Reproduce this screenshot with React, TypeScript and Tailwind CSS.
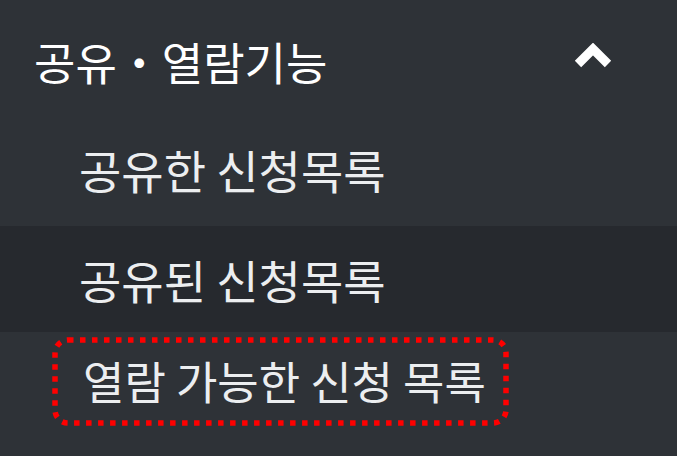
export default function App() {
  const font = { fontFamily: '"Noto Sans CJK KR", "Noto Sans", sans-serif' };
  return (
    <div className="w-[677px] h-[456px] overflow-hidden bg-[#2e3237] text-white" style={font}>
      <div className="h-[120px] flex items-center justify-between pl-[34px] pr-[64px] pt-[2px]">
        <span className="text-[45px] leading-none">공유・열람기능</span>
        <svg width="40" height="26" viewBox="0 0 40 26" className="mb-[10px]">
          <path d="M5 21 L20 6 L35 21" fill="none" stroke="#fff" strokeWidth="9" strokeLinejoin="miter" />
        </svg>
      </div>
      <div className="h-[106px] flex items-center pl-[79px] pb-[8px]">
        <span className="text-[46px] leading-none text-[#eceef0]">공유한 신청목록</span>
      </div>
      <div className="h-[106px] flex items-center pl-[79px] bg-[#26292e]">
        <span className="text-[46px] leading-none text-[#eceef0]">공유된 신청목록</span>
      </div>
      <div className="pt-[5px] pl-[52px]">
        <div className="relative w-[457px] h-[89px] flex items-center pl-[31px] pb-[2px]">
          <span className="text-[45px] leading-none text-[#eceef0]">열람 가능한 신청 목록</span>
          <svg className="absolute inset-0" width="457" height="89" viewBox="0 0 457 89">
            <rect x="3" y="3" width="451" height="83" rx="13" fill="none" stroke="#ff0000" strokeWidth="5.5" strokeDasharray="5.5 6.5" />
          </svg>
        </div>
      </div>
    </div>
  );
}
